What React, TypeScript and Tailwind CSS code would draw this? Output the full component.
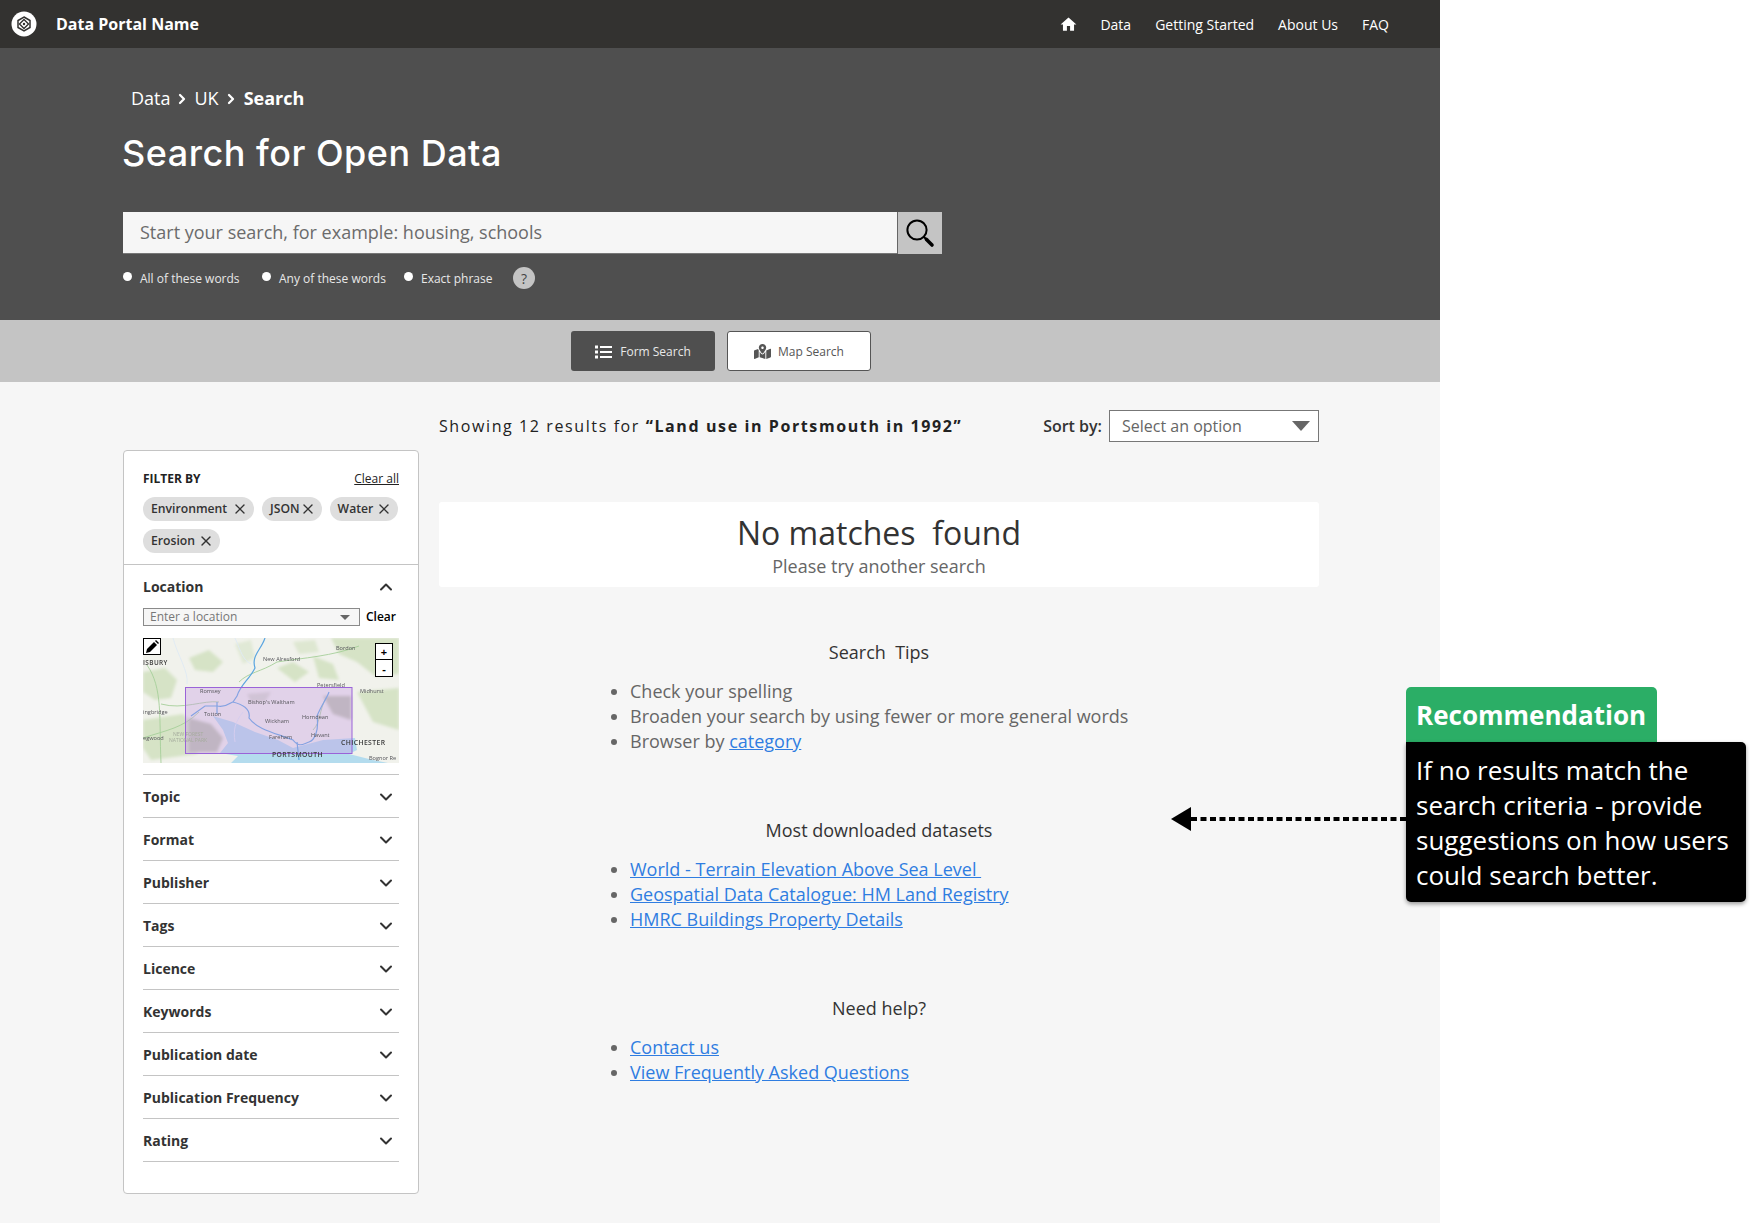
import React from 'react';
import { ChevronDown, ChevronRight, ChevronUp, X } from 'lucide-react';
import { FaMapMarkedAlt } from 'react-icons/fa';
import { MdHome } from 'react-icons/md';

const NAV_LINKS = ['Data', 'Getting Started', 'About Us', 'FAQ'];
const FILTER_ROWS = ['Topic', 'Format', 'Publisher', 'Tags', 'Licence', 'Keywords', 'Publication date', 'Publication Frequency', 'Rating'];
const CHIPS = [
  { label: 'Environment', gap: 'ml-[5px]' },
  { label: 'JSON', gap: 'ml-[0px]' },
  { label: 'Water', gap: 'ml-[3px]' },
  { label: 'Erosion', gap: 'ml-[3px]' },
];
const MATCH_TYPES = [
  { label: 'All of these words', width: 'w-[139px]' },
  { label: 'Any of these words', width: 'w-[142px]' },
  { label: 'Exact phrase', width: 'w-[109px]' },
];
const MAP_LABELS = [
  { x: 120, y: 23, text: 'New Alresford', size: 5.6 },
  { x: 193, y: 12, text: 'Bordon', size: 5.6 },
  { x: 0, y: 27, text: 'ISBURY', size: 6.4, spaced: true },
  { x: 57, y: 55, text: 'Romsey', size: 5.6 },
  { x: 105, y: 66, text: "Bishop's Waltham", size: 5.6 },
  { x: 174, y: 49, text: 'Petersfield', size: 5.6 },
  { x: 217, y: 55, text: 'Midhurst', size: 5.6 },
  { x: 0, y: 76, text: 'ingbridge', size: 5.6 },
  { x: 61, y: 78, text: 'Totton', size: 5.6 },
  { x: 122, y: 85, text: 'Wickham', size: 5.6 },
  { x: 159, y: 81, text: 'Horndean', size: 5.6 },
  { x: 126, y: 101, text: 'Fareham', size: 5.6 },
  { x: 168, y: 99, text: 'Havant', size: 5.6 },
  { x: 198, y: 107, text: 'CHICHESTER', size: 6.8, spaced: true },
  { x: 129, y: 119, text: 'PORTSMOUTH', size: 6.8, spaced: true },
  { x: 0, y: 102, text: 'egwood', size: 5.6 },
  { x: 226, y: 122, text: 'Bognor Re', size: 5.6 },
];

const LogoMark = () => (
  <svg width="26" height="26" viewBox="0 0 26 26">
    <circle cx="13" cy="13" r="12.5" fill="#fff" />
    <path d="M13 6 19 9.5V16.500L13 20 7 16.500V9.500Z" fill="none" stroke="#333230" strokeWidth="1.5" />
    <path d="M13 8.500 17.500 13 13 17.500 8.500 13Z" fill="none" stroke="#333230" strokeWidth="1.4" />
    <circle cx="13" cy="13" r="1.2" fill="#333230" />
  </svg>
);

const ListIcon = () => (
  <svg width="18" height="14" viewBox="0 0 18 14" fill="#fff">
    <rect x="0" y="0.5" width="3" height="3" />
    <rect x="0" y="5.5" width="3" height="3" />
    <rect x="0" y="10.5" width="3" height="3" />
    <rect x="5" y="1" width="12" height="2" />
    <rect x="5" y="6" width="12" height="2" />
    <rect x="5" y="11" width="12" height="2" />
  </svg>
);

const SearchGlyph = () => (
  <svg width="30" height="30" viewBox="0 0 30 30" fill="none" stroke="#000" strokeLinecap="round">
    <circle cx="12" cy="12" r="9.6" strokeWidth="2" />
    <path d="M19 19l2.5 2.5" strokeWidth="2" />
    <path d="M21.5 21.5l5.5 5.5" strokeWidth="3.6" />
  </svg>
);

const PencilGlyph = () => (
  <svg width="14" height="14" viewBox="0 0 14 14">
    <path d="M1 13l1-4 7-7 3 3-7 7z" fill="#000" />
    <path d="M10 1l1-1 3 3-1 1z" fill="#000" />
  </svg>
);

const MapPreview = () => (
  <div className="relative h-[125px] w-[256px] overflow-hidden">
    <svg width="256" height="125" viewBox="0 0 256 125" className="block blur-[0.3px]">
      <defs>
        <filter id="soft" x="-10%" y="-10%" width="120%" height="120%">
          <feGaussianBlur stdDeviation="1.6" />
        </filter>
      </defs>
      <rect width="256" height="125" fill="#f1f2ec" />
      <g fill="#d6e3c6" filter="url(#soft)">
        <path d="M0 34 22 30 34 42 28 60 12 62 0 54Z" />
        <path d="M46 20 66 12 80 24 70 34 52 32Z" />
        <path d="M92 6 108 2 112 20 100 26Z" opacity="0.6" />
        <path d="M134 30 150 24 166 34 152 44Z" />
        <path d="M170 18 190 26 196 42 176 40Z" />
        <path d="M188 0 256 0 256 36 232 38 214 24 196 16Z" />
        <path d="M214 54 256 50 256 92 230 84Z" />
        <path d="M0 82 40 76 60 96 54 116 8 122 0 110Z" />
        <path d="M150 4 172 2 176 14 156 16Z" opacity="0.7" />
      </g>
      <g fill="#bcc4ae" filter="url(#soft)">
        <path d="M46 80 68 86 80 100 74 114 46 114Z" />
        <path d="M180 58 208 58 208 82 190 76Z" />
        <path d="M104 56 128 54 122 64 108 64Z" opacity="0.5" />
      </g>
      <path d="M70 78 90 84 112 94 135 102 150 110 165 106 180 102 212 100 214 112 206 116 230 122 245 125H88L95 118 77 115 85 105 80 92Z" fill="#b4dcee" />
      <g fill="none" stroke="#a6cf9a" strokeWidth="0.9">
        <path d="M4 27 C20 50 16 80 18 125" />
        <path d="M96 44 C106 34 118 34 134 24 C160 20 190 18 216 8" />
        <path d="M183 60 C176 72 178 84 170 92" />
        <path d="M18 66 C40 72 60 62 76 64" />
        <path d="M0 100 C24 92 40 90 56 74" />
      </g>
      <g fill="none" stroke="#5aa5e0" strokeWidth="1.2">
        <path d="M122 0 C118 12 108 18 112 30 C106 42 98 46 94 58 L90 64" />
        <path d="M48 78 L62 68 L74 68 C84 70 88 64 90 64 C98 66 108 70 106 80 C114 92 136 96 150 102 C156 110 160 106 166 104 C172 102 176 92 174 78 C178 68 184 60 186 54" />
        <path d="M74 64 L74 76" />
        <path d="M154 104 L156 122" />
      </g>
      <g fill="none" stroke="#dfeaf4" strokeWidth="0.9">
        <path d="M30 0 C34 16 46 34 44 46" />
        <path d="M92 0 C98 14 100 22 108 26" />
        <path d="M100 74 C92 84 90 92 92 104" />
      </g>
      <rect x="42.5" y="49.5" width="166.5" height="66" fill="#c79de6" fillOpacity="0.38" stroke="#9a63d8" strokeWidth="1" />
      <text x="30" y="98" fontSize="5" fill="#a5ab9d" fontFamily="Open Sans, sans-serif">NEW FOREST</text>
      <text x="26" y="104" fontSize="5" fill="#a5ab9d" fontFamily="Open Sans, sans-serif">NATIONAL PARK</text>
      {MAP_LABELS.map((item) => (
        <text
          key={item.text}
          x={item.x}
          y={item.y}
          fontSize={item.size}
          fill={item.spaced ? '#3a3a3a' : '#55555a'}
          fontWeight={item.spaced ? 600 : 400}
          letterSpacing={item.spaced ? 0.4 : 0}
          fontFamily="Open Sans, sans-serif"
        >
          {item.text}
        </text>
      ))}
    </svg>
    <button className="absolute left-0 top-0 flex h-[17px] w-[18px] items-center justify-center border border-black bg-white">
      <PencilGlyph />
    </button>
    <div className="absolute left-[232px] top-[5px] flex w-[18px] flex-col border border-black bg-white text-[11px] font-bold leading-none text-black">
      <span className="flex h-[16px] items-center justify-center border-b border-black">+</span>
      <span className="flex h-[16px] items-center justify-center">-</span>
    </div>
  </div>
);

const Chip = ({ label, gap }: { label: string; gap: string }) => (
  <span className="flex h-[24px] items-center rounded-full bg-[#dedede] pl-[8px] pr-[6px] text-[12.2px] font-semibold text-[#333]">
    {label}
    <X size={16} strokeWidth={2} className={gap} />
  </span>
);

const FilterPanel = () => (
  <aside className="mt-[40px] h-[744px] w-[296px] rounded-[4px] border border-[#c4c4c4] bg-white">
    <div className="h-[114px] border-b border-[#c4c4c4] px-[19px] pt-[19px]">
      <div className="flex h-[18px] items-center justify-between text-[12px] text-[#222]">
        <span className="font-bold">FILTER BY</span>
        <span className="underline">Clear all</span>
      </div>
      <div className="-mr-[4px] mt-[9px] flex flex-wrap gap-x-[8px] gap-y-[8px]">
        {CHIPS.map((chip) => (
          <Chip key={chip.label} label={chip.label} gap={chip.gap} />
        ))}
      </div>
    </div>
    <div className="px-[19px]">
      <div className="flex h-[43px] items-center justify-between pr-[3px] text-[14px] font-bold text-[#333]">
        Location
        <ChevronUp size={20} strokeWidth={2.4} />
      </div>
      <div className="flex items-center justify-between">
        <div className="flex h-[18px] w-[217px] items-center justify-between border border-[#8a8a8a] bg-[#f6f6f6] pl-[6px] pr-[9px] text-[12px] text-[#777]">
          Enter a location
          <span className="h-0 w-0 border-x-[5px] border-t-[5px] border-x-transparent border-t-[#666]" />
        </div>
        <span className="pr-[3px] text-[12px] font-semibold text-black">Clear</span>
      </div>
      <div className="mt-[12px]">
        <MapPreview />
      </div>
      <div className="mt-[11px] border-t border-[#c4c4c4]">
        {FILTER_ROWS.map((row) => (
          <div key={row} className="flex h-[43px] items-center justify-between border-b border-[#c4c4c4] pr-[3px] text-[14px] font-bold text-[#333]">
            {row}
            <ChevronDown size={20} strokeWidth={2.4} className="mt-px" />
          </div>
        ))}
      </div>
    </div>
  </aside>
);

const SuggestionBlock = ({ title, className, children }: { title: string; className: string; children: React.ReactNode }) => (
  <section className={className}>
    <h3 className="h-[25px] text-center text-[18px] leading-[25px] text-[#333]">{title}</h3>
    <ul className="mt-[14px] list-disc pl-[191px] text-[18px] leading-[25px] text-[#666]">{children}</ul>
  </section>
);

const BlueLink = ({ children }: { children: React.ReactNode }) => (
  <a className="text-[#2f7de1] underline">{children}</a>
);

export default function App() {
  return (
    <div className="relative min-h-[1223px] overflow-hidden bg-white font-['Open_Sans',sans-serif]">
      <div className="w-[1440px] bg-[#f6f6f6]">
        <header className="flex h-[48px] items-center bg-[#333230] text-white">
          <div className="ml-[11px]">
            <LogoMark />
          </div>
          <span className="ml-[19px] text-[16px] font-bold">Data Portal Name</span>
          <nav className="ml-auto mr-[51px] flex items-center gap-[24px] text-[14px]">
            <MdHome size={19} className="-mr-[2px]" />
            {NAV_LINKS.map((link) => (
              <a key={link}>{link}</a>
            ))}
          </nav>
        </header>

        <div className="h-[272px] bg-[#4f4f4f] pl-[123px] text-white">
          <div className="flex items-center pl-[8px] pt-[38px] text-[18px] leading-[25px]">
            Data
            <ChevronRight size={16} strokeWidth={3.4} className="mx-[4px]" />
            UK
            <ChevronRight size={16} strokeWidth={3.4} className="mx-[4px]" />
            <span className="ml-px font-bold">Search</span>
          </div>
          <h1 className="-ml-px mt-[19px] font-['Inter',sans-serif] text-[36px] font-medium leading-[46px] tracking-[0.5px]">Search for Open Data</h1>
          <div className="mt-[36px] flex h-[42px] w-[819px]">
            <div className="flex flex-1 items-center border-b border-[#777] bg-[#f6f6f6] pl-[17px] text-[18px] text-[#6b6b6b]">
              Start your search, for example: housing, schools
            </div>
            <button className="flex w-[45px] items-center justify-center border-l border-[#666] bg-[#c4c4c4]">
              <SearchGlyph />
            </button>
          </div>
          <div className="mt-[13px] flex h-[22px] items-center text-[12px] text-[#e8e8e8]">
            {MATCH_TYPES.map((type) => (
              <label key={type.label} className={`flex items-center pt-px ${type.width}`}>
                <span className="mb-[4px] mr-[8px] h-[9px] w-[9px] rounded-full bg-white" />
                {type.label}
              </label>
            ))}
            <span className="flex h-[22px] w-[22px] items-center justify-center rounded-full bg-[#c4c4c4] text-[14px] text-[#444]">?</span>
          </div>
        </div>

        <div className="flex h-[62px] items-center gap-[12px] bg-[#c4c4c4] pl-[571px]">
          <button className="flex h-[40px] w-[144px] items-center justify-center gap-[7px] rounded-[3px] bg-[#4f4f4f] pt-px text-[12px] text-[#e8e8e8]">
            <ListIcon />
            Form Search
          </button>
          <button className="flex h-[40px] w-[144px] items-center justify-center gap-[7px] rounded-[3px] border border-[#555] bg-white pt-px text-[12px] text-[#555]">
            <FaMapMarkedAlt size={17} />
            Map Search
          </button>
        </div>

        <main className="flex h-[841px] pl-[123px]">
          <div className="pt-[28px]">
            <FilterPanel />
          </div>
          <div className="ml-[20px] w-[880px] pt-[28px]">
            <div className="flex h-[32px] items-center justify-between">
              <p className="text-[16px] tracking-[1.6px] text-[#222]">
                Showing 12 results for <b>“Land use in Portsmouth in 1992”</b>
              </p>
              <div className="flex items-center gap-[7px]">
                <span className="mb-[1px] text-[16px] font-semibold text-[#333]">Sort by:</span>
                <div className="flex h-[32px] w-[210px] items-center justify-between border border-[#777] bg-white pl-[12px] pr-[8px] text-[16px] text-[#666]">
                  Select an option
                  <span className="h-0 w-0 border-x-[9px] border-t-[10px] border-x-transparent border-t-[#666]" />
                </div>
              </div>
            </div>

            <div className="mt-[60px] flex h-[85px] flex-col items-center rounded-[3px] bg-white pt-[9px]">
              <h2 className="text-[32px] leading-[44px] text-[#333]">No matches&nbsp; found</h2>
              <p className="-mt-px text-[18px] leading-[25px] text-[#666]">Please try another search</p>
            </div>

            <SuggestionBlock title="Search&nbsp; Tips" className="mt-[53px]">
              <li>Check your spelling</li>
              <li>Broaden your search by using fewer or more general words</li>
              <li>
                Browser by <BlueLink>category</BlueLink>
              </li>
            </SuggestionBlock>

            <SuggestionBlock title="Most downloaded datasets" className="mt-[64px]">
              <li><BlueLink>World - Terrain Elevation Above Sea Level&nbsp;</BlueLink></li>
              <li><BlueLink>Geospatial Data Catalogue: HM Land Registry</BlueLink></li>
              <li><BlueLink>HMRC Buildings Property Details</BlueLink></li>
            </SuggestionBlock>

            <SuggestionBlock title="Need help?" className="mt-[64px]">
              <li><BlueLink>Contact us</BlueLink></li>
              <li><BlueLink>View Frequently Asked Questions</BlueLink></li>
            </SuggestionBlock>
          </div>
        </main>
      </div>

      {/* annotation sits over the page */}
      <div className="absolute left-[1171px] top-[687px] flex items-start">
        <svg width="235" height="24" viewBox="0 0 235 24" className="mt-[120px]">
          <path d="M20 12H235" stroke="#000" strokeWidth="4" strokeDasharray="6 3.5" fill="none" />
          <path d="M0 12 20 0V24Z" fill="#000" />
        </svg>
        <div className="w-[340px]">
          <div className="flex h-[55px] w-[251px] items-center rounded-t-[5px] bg-[#2bae66] pl-[10px] pt-px text-[26px] font-bold text-white">
            Recommendation
          </div>
          <div className="h-[160px] rounded-[5px] rounded-tl-none bg-black pl-[10px] pt-[11px] text-[26px] leading-[35px] text-white shadow-[0_2px_4px_rgba(0,0,0,0.4)]">
            If no results match the
            <br />
            search criteria - provide
            <br />
            suggestions on how users
            <br />
            could search better.
          </div>
        </div>
      </div>
    </div>
  );
}
